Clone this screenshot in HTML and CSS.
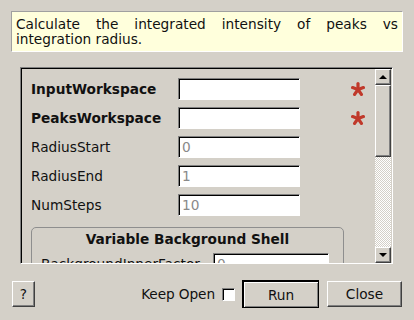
FILE: index.html
```html
<!DOCTYPE html>
<html lang="en">
<head>
    <meta charset="UTF-8">
    <title>IntegratePeaksCheckStrategy</title>
    <link rel="stylesheet" href="styles.css">
</head>
<body>
    <div class="dialog">
        <div class="summary">
            <span class="summary-line">Calculate the integrated intensity of peaks vs</span>
            <span class="summary-last">integration radius.</span>
        </div>

        <div class="props-frame">
            <div class="props-view">
                <div class="props">
                    <label class="prop-name mandatory">InputWorkspace</label>
                    <input class="prop-value" type="text">
                    <svg class="required" width="14" height="14" viewBox="0 0 14 14">
                        <g stroke="#c0392b" stroke-width="3.2" stroke-linecap="round">
                            <line x1="7" y1="7.5" x2="7" y2="1.6"/>
                            <line x1="7" y1="7.5" x2="12.4" y2="5.6"/>
                            <line x1="7" y1="7.5" x2="10.4" y2="12.4"/>
                            <line x1="7" y1="7.5" x2="3.6" y2="12.4"/>
                            <line x1="7" y1="7.5" x2="1.6" y2="5.6"/>
                        </g>
                    </svg>

                    <label class="prop-name mandatory">PeaksWorkspace</label>
                    <input class="prop-value" type="text">
                    <svg class="required" width="14" height="14" viewBox="0 0 14 14">
                        <g stroke="#c0392b" stroke-width="3.2" stroke-linecap="round">
                            <line x1="7" y1="7.5" x2="7" y2="1.6"/>
                            <line x1="7" y1="7.5" x2="12.4" y2="5.6"/>
                            <line x1="7" y1="7.5" x2="10.4" y2="12.4"/>
                            <line x1="7" y1="7.5" x2="3.6" y2="12.4"/>
                            <line x1="7" y1="7.5" x2="1.6" y2="5.6"/>
                        </g>
                    </svg>

                    <label class="prop-name">RadiusStart</label>
                    <input class="prop-value" type="text" placeholder="0">
                    <span></span>

                    <label class="prop-name">RadiusEnd</label>
                    <input class="prop-value" type="text" placeholder="1">
                    <span></span>

                    <label class="prop-name">NumSteps</label>
                    <input class="prop-value" type="text" placeholder="10">
                    <span></span>
                </div>

                <div class="group">
                    <div class="group-title">Variable Background Shell</div>
                    <div class="group-row">
                        <label class="prop-name">BackgroundInnerFactor</label>
                        <input class="prop-value" type="text" placeholder="0">
                    </div>
                </div>
            </div>

            <div class="vscroll">
                <div class="sb-button"><span class="arrow-up"></span></div>
                <div class="sb-thumb"></div>
                <div class="sb-track"></div>
                <div class="sb-button"><span class="arrow-down"></span></div>
            </div>
        </div>

        <div class="buttons">
            <button class="btn btn-help">?</button>
            <span class="spacer"></span>
            <label class="keep-open">Keep Open <span class="checkbox"></span></label>
            <button class="btn btn-run">Run</button>
            <button class="btn btn-close">Close</button>
        </div>
    </div>
</body>
</html>
```

FILE: styles.css
```css
body {
    margin: 0;
    background-color: #d4d0c8;
    font-family: "DejaVu Sans", sans-serif;
    font-size: 13.7px;
    color: #111;
}

.dialog {
    width: 414px;
    height: 320px;
    padding-top: 11px;
    box-sizing: border-box;
}

.summary {
    margin: 0 11px;
    height: 41px;
    box-sizing: border-box;
    padding: 5px 4px 0 4px;
    line-height: 15px;
    background-color: #ffffdc;
    border: 1px solid;
    border-color: #a0a0a0 #fff #fff #a0a0a0;
}

.summary-line {
    display: block;
    text-align: justify;
    text-align-last: justify;
}

.summary-last {
    display: block;
}

/* sunken frame holding the property list */
.props-frame {
    display: flex;
    margin: 15px 0 0 20px;
    width: 373px;
    height: 197px;
    box-sizing: border-box;
    border: 1px solid;
    border-color: #808080 #fff #fff #808080;
    box-shadow: inset 1px 1px #000;
    padding: 1px 1px 0 1px;
}

.props-view {
    flex: 1;
    overflow: hidden;
    padding: 9px 0 0 9px;
}

.props {
    display: grid;
    grid-template-columns: 147px 122px 65px;
    grid-auto-rows: 22px;
    row-gap: 7px;
    align-items: center;
}

.prop-name {
    line-height: 15px;
    white-space: nowrap;
}

.mandatory {
    font-weight: bold;
}

.prop-value {
    width: 122px;
    height: 22px;
    box-sizing: border-box;
    margin: 0;
    padding: 0 3px;
    font-family: "DejaVu Sans", sans-serif;
    font-size: 13.7px;
    background: #fff;
    border: 1px solid;
    border-color: #808080 #fff #fff #808080;
    box-shadow: inset 1px 1px #000;
    outline: none;
}

.prop-value::placeholder {
    color: #8a8a8a;
}

.required {
    display: block;
    margin-left: 51px;
}

.group {
    margin-top: 11px;
    width: 313px;
    height: 60px;
    box-sizing: border-box;
    border: 1px solid #8e8e8e;
    border-radius: 5px;
    padding: 4px 0 0 9px;
}

.group-title {
    font-weight: bold;
    text-align: center;
    line-height: 15px;
    padding-right: 9px;
}

.group-row {
    display: flex;
    align-items: center;
    margin-top: 6px;
}

.group-row .prop-name {
    width: 172px;
}

.group-row .prop-value {
    width: 116px;
}

/* vertical scroll bar */
.vscroll {
    width: 16px;
    display: flex;
    flex-direction: column;
}

.sb-button,
.sb-thumb,
.btn {
    box-sizing: border-box;
    background-color: #d4d0c8;
    border: 1px solid;
    border-color: #fff #404040 #404040 #fff;
    box-shadow: inset -1px -1px #808080;
}

.sb-button {
    height: 16px;
    display: flex;
    align-items: center;
    justify-content: center;
}

.sb-thumb {
    height: 72px;
}

.sb-track {
    flex: 1;
    background: repeating-conic-gradient(#fff 0 25%, #d4d0c8 0 50%) 0 0 / 2px 2px;
}

.arrow-up {
    border-left: 4px solid transparent;
    border-right: 4px solid transparent;
    border-bottom: 4px solid #000;
}

.arrow-down {
    border-left: 4px solid transparent;
    border-right: 4px solid transparent;
    border-top: 4px solid #000;
}

/* bottom button row */
.buttons {
    display: flex;
    align-items: center;
    margin-top: 16px;
    padding: 0 12px;
    height: 28px;
}

.spacer {
    flex: 1;
}

.btn {
    height: 26px;
    margin: 0;
    padding: 0;
    font-family: "DejaVu Sans", sans-serif;
    font-size: 13.7px;
    color: #111;
}

.btn-help {
    width: 23px;
}

.keep-open {
    display: flex;
    align-items: center;
    gap: 7px;
    letter-spacing: -0.1px;
}

.checkbox {
    width: 13px;
    height: 13px;
    box-sizing: border-box;
    background: #fff;
    border: 1px solid;
    border-color: #808080 #fff #fff #808080;
    box-shadow: inset 1px 1px #000;
}

.btn-run {
    width: 77px;
    height: 28px;
    margin-left: 7px;
    border-width: 2px 1px 1px 2px;
    border-color: #000;
    box-shadow: inset 1px 1px #fff, inset -1px -1px #808080;
}

.btn-close {
    width: 75px;
    margin-left: 8px;
}
```
